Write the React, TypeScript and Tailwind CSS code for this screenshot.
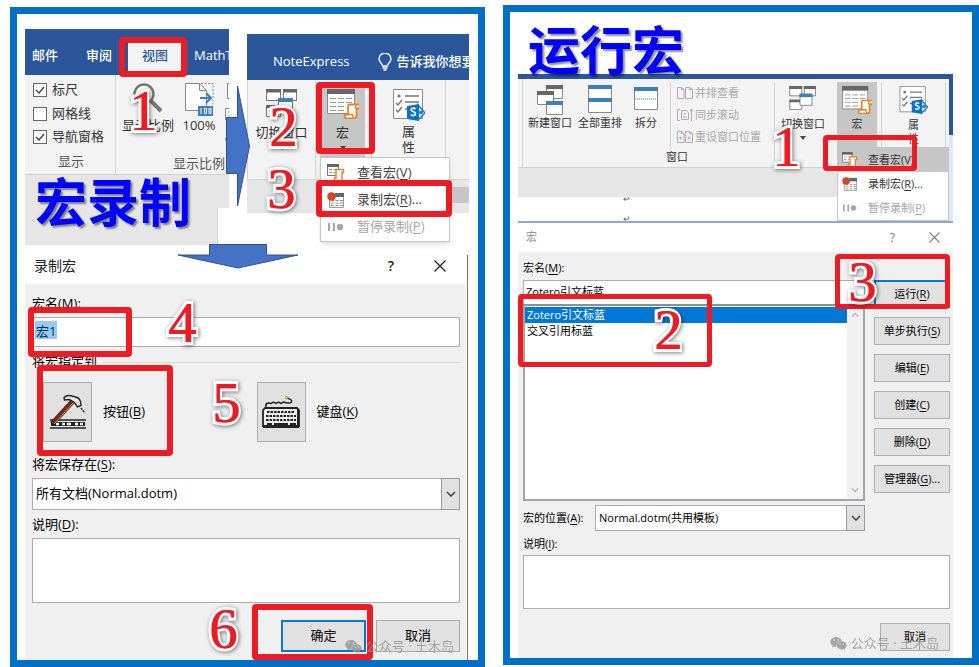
import type { ReactNode } from "react";
import { FaWeixin } from "react-icons/fa";

function RedBox({ className }: { className: string }) {
  return <div className={`pointer-events-none absolute z-20 rounded-sm border-[#ed1c24] ${className}`} />;
}

function Step({ n, className }: { n: number; className: string }) {
  return (
    <span
      className={`pointer-events-none absolute z-30 font-['Liberation_Serif',serif] text-[56px] leading-[54px] text-[#ed1c24] [text-shadow:1px_0_0_#ed1c24] drop-shadow-[1px_1px_2px_rgba(0,0,0,0.5)] [-webkit-text-stroke:6px_white] [paint-order:stroke_fill] ${className}`}
    >
      {n}
    </span>
  );
}

function Key({ text, k, tail = "" }: { text: string; k: string; tail?: string }) {
  return (
    <>
      {text}(<span className="underline underline-offset-2">{k}</span>){tail}
    </>
  );
}

function MacroIcon({ className }: { className: string }) {
  return (
    <svg viewBox="0 0 32 30" className={className} fill="none">
      <path d="M.5.5h27v24H.5z" fill="#fff" stroke="#8a8a8a" />
      <path d="M0 0h28v5H0z" fill="#666" />
      <path d="M3 9.500h6M11 9.500h6M19 9.500h6M3 13.500h6M11 13.500h6M19 13.500h6M3 17.500h6M11 17.500h6M3 21.500h6M11 21.500h6" stroke="#999" />
      <path d="M22 15.500h9c2.500 0 2.500 4 0 4h-1.500V26c0 2-1 3.500-2.500 3.500h-7.500c-2.500 0-2.500-4 0-4H21V18c0-1.500.5-2.500 1.500-2.500z" fill="#fff" stroke="#e8822a" strokeWidth="1.800" />
      <path d="M20 25.500h5.500c0 2 .5 3.500 1.500 4M29.500 19.500c-1.500 0-1.500-2.500 0-3.500" stroke="#e8822a" strokeWidth="1.500" />
    </svg>
  );
}

function ViewMacroIcon({ className }: { className: string }) {
  return (
    <svg viewBox="0 0 18 18" className={className} fill="none">
      <path d="M.5.5h11v11H.5z" fill="#fff" stroke="#777" />
      <path d="M0 0h12v3H0z" fill="#666" />
      <path d="M2 5.500h3M6.500 5.500h3M2 8.500h3M6.500 8.500h2" stroke="#999" />
      <path d="M9 5.500h7.500v3H15V17H7.500v-3H9z" fill="#fff" stroke="#e8822a" strokeWidth="1.500" />
    </svg>
  );
}

function SwitchIcon({ className }: { className: string }) {
  return (
    <svg viewBox="0 0 32 28" className={className} fill="#fff">
      <path d="M0.5 0.5h14v11h-14zM17.5 0.5h13v11h-13zM0.5 16.5h14v11h-14z" stroke="#777" />
      <path d="M0 0h15v3.500H0zM17 0h14v3.500H17zM0 16h15v3H0z" fill="#666" />
      <path d="M12.500 9.500h14v13h-14z" stroke="#777" />
      <path d="M12 9h15v4H12z" fill="#3b7fc0" />
    </svg>
  );
}

function PropertiesIcon({ className }: { className: string }) {
  return (
    <svg viewBox="0 0 32 32" className={className} fill="none">
      <path d="M0.500 0.500h29v29h-29z" fill="#fff" stroke="#8a8a8a" />
      <circle cx="6" cy="7" r="1.600" fill="#777" />
      <path d="M12 7h14M12 13h14M12 20h4M3 14l2 2 4-5M3 21l2 2 4-5" stroke="#777" strokeWidth="1.500" />
      <path d="M25 16l7 8-7 7z" fill="#fff" stroke="#1a7cc7" strokeWidth="1.500" />
      <circle cx="28" cy="23.500" r="2" fill="#1a7cc7" />
      <path d="M14 17l12-2v17l-12-2z" fill="#0c72c2" />
      <path d="M22.500 20c-2-1.500-4.500-.8-4.300 1 .2 1.700 4.200 1.500 4.200 3.700 0 2.100-3 2.300-4.600 1" stroke="#fff" strokeWidth="1.700" />
    </svg>
  );
}

function RecordIcon({ className }: { className: string }) {
  return (
    <svg viewBox="0 0 18 16" className={className} fill="none">
      <path d="M2.500 2.500h14v13h-14z" fill="#fff" stroke="#9a9a9a" />
      <path d="M8 1h9v4H8z" fill="#666" />
      <path d="M4 8.500h3M8.500 8.500h3M13 8.500h3M4 11h3M8.500 11h3M13 11h3M4 13.500h3M8.500 13.500h3M13 13.500h3" stroke="#8a8a8a" />
      <circle cx="4.500" cy="4.500" r="4.300" fill="#d24726" />
    </svg>
  );
}

function PauseIcon({ className }: { className: string }) {
  return (
    <svg viewBox="0 0 18 16" className={className} fill="#a6a6a6">
      <path d="M1 4h2v8H1zM6 4h2v8H6z" />
      <circle cx="13" cy="8" r="3.200" />
    </svg>
  );
}

function Caret({ className = "" }: { className?: string }) {
  return (
    <svg viewBox="0 0 6 4" className={`h-1 w-1.5 fill-[#444] ${className}`}>
      <path d="M0 0h6L3 4z" />
    </svg>
  );
}

function Cross({ className }: { className: string }) {
  return (
    <svg viewBox="0 0 12 12" className={className} fill="none" stroke="currentColor" strokeWidth="1.300">
      <path d="M.5.5l11 11M11.500.5l-11 11" />
    </svg>
  );
}

function Chevron({ className, up = false }: { className: string; up?: boolean }) {
  return (
    <svg viewBox="0 0 10 6" className={className} fill="none" stroke="currentColor" strokeWidth="1.600">
      <path d={up ? "M1 5l4-4 4 4" : "M1 1l4 4 4-4"} />
    </svg>
  );
}

function Check({ label, checked = false }: { label: string; checked?: boolean }) {
  return (
    <label className="flex h-6 items-center gap-[5px]">
      <span className="grid size-3.5 place-items-center">
        <input
          type="checkbox"
          defaultChecked={checked}
          className="peer col-start-1 row-start-1 size-3.5 appearance-none border border-[#666] bg-white"
        />
        <svg viewBox="0 0 10 8" className="invisible col-start-1 row-start-1 h-2 w-2.5 peer-checked:visible" fill="none" stroke="#444" strokeWidth="1.400">
          <path d="M1 4l3 3 5-6" />
        </svg>
      </span>
      {label}
    </label>
  );
}

function DropDown({ id, value, className }: { id: string; value: string; className: string }) {
  return (
    <div className={`relative flex ${className}`}>
      <select id={id} className="w-full appearance-none border border-[#abadb3] bg-white px-[3px] outline-none">
        <option>{value}</option>
      </select>
      <span className="pointer-events-none absolute inset-y-0 right-0 flex w-[19px] items-center justify-center border border-[#9a9a9a] bg-[#e1e1e1] text-[#444]">
        <Chevron className="h-1.5 w-2.5" />
      </span>
    </div>
  );
}

function PushButton({ children, className = "", label }: { children: ReactNode; className?: string; label?: string }) {
  return (
    <button type="button" aria-label={label} className={`border border-[#adadad] bg-[#e1e1e1] whitespace-nowrap ${className}`}>
      {children}
    </button>
  );
}

function Watermark({ className }: { className: string }) {
  return (
    <div className={`pointer-events-none absolute z-30 flex items-center gap-1 text-[13px] leading-5 whitespace-nowrap text-[#929292] opacity-80 ${className}`}>
      <FaWeixin className="size-[17px]" />
      <span>公众号 · 土木岛</span>
    </div>
  );
}

function ViewRibbon() {
  return (
    <section className="relative h-[216px] min-w-0">
      <div className="h-full overflow-hidden">
        <nav className="flex h-[46px] items-center bg-[#2b579a] pt-2 pl-[7px] text-[13px] font-medium whitespace-nowrap text-white">
          <button type="button">邮件</button>
          <button type="button" className="ml-7">审阅</button>
          <button type="button" className="ml-4 h-[30px] w-[54px] shrink-0 bg-[#f3f3f3] text-[#2b579a]">视图</button>
          <button type="button" className="ml-3">MathType</button>
        </nav>
        <div className="flex h-[100px] border-b border-[#d2d2d2] bg-[#f3f3f3] text-[13px] text-[#333]">
          <div className="flex w-[91px] shrink-0 flex-col border-r border-[#d4d4d4] pt-[3px] pl-2 whitespace-nowrap">
            <Check label="标尺" checked />
            <Check label="网格线" />
            <Check label="导航窗格" checked />
            <span className="pl-[25px] leading-[25px] text-[#555]">显示</span>
          </div>
          <div className="flex min-w-0 flex-1 flex-col justify-between pt-2">
            <div className="flex pl-[5px] whitespace-nowrap">
              <button type="button" className="flex w-[54px] shrink-0 flex-col items-center">
                <svg viewBox="0 0 30 32" className="h-8 w-[30px]" fill="none" stroke="#777">
                  <circle cx="11" cy="11" r="9.500" fill="#fff" strokeWidth="2.500" />
                  <path d="M18 18l10 10" strokeWidth="4" />
                </svg>
                <span className="leading-5">显示比例</span>
              </button>
              <button type="button" className="ml-1.5 flex w-9 shrink-0 flex-col items-center">
                <svg viewBox="0 0 29 34" className="h-[34px] w-[29px]" fill="none">
                  <path d="M.5.5h14l7 7v20H.5z" fill="#fff" stroke="#888" />
                  <path d="M14.500.5v7h7" stroke="#888" />
                  <path d="M16 .5h12v21" stroke="#888" strokeDasharray="2 1.500" />
                  <path d="M15 15h10M21 10l5 5-5 5" stroke="#3b7fc0" strokeWidth="2" />
                  <path d="M13 23h15v10H13z" fill="#3b7fc0" />
                  <path d="M16 25v6M19.500 25.500h2v5h-2zM24 25.500h2v5h-2z" stroke="#fff" />
                </svg>
                <span className="leading-4">100%</span>
              </button>
              <svg viewBox="0 0 8 66" className="ml-2 h-[66px] w-2 shrink-0" fill="none" stroke="#888">
                <path d="M8 .5H2.500v15H8M8 25.500H.5v11h8M3 29h5M3 33h5" />
                <path d="M5 52l-4 4 4 4" stroke="#3b7fc0" strokeWidth="2" />
              </svg>
            </div>
            <span className="pr-1 text-right leading-[22px] text-[#555]">显示比例</span>
          </div>
        </div>
        <div className="h-[33px] bg-[#e6e6e6]" />
        <div className="mr-[11px] h-[37px] border-r border-[#d2d2d2] bg-[#e6e6e6]" />
      </div>
      <h1 className="absolute top-[147px] left-[10px] text-[52px] leading-[52px] font-bold whitespace-nowrap text-[#0000ff] [text-shadow:2px_2px_2px_rgba(0,0,0,0.45)]">宏录制</h1>
      <RedBox className="top-2 left-[94px] h-10 w-[68px] border-6" />
      <Step n={1} className="top-[55px] left-[104px]" />
      <svg viewBox="0 0 24 122" className="absolute top-[56px] left-[201px] z-10 h-[122px] w-6">
        <path d="M.5 32.500h11V1L23.500 61l-12 60V88.500H.5z" fill="#4472c4" stroke="#2f528f" />
      </svg>
      <svg viewBox="0 0 122 25" className="absolute top-[215px] left-[152px] z-10 h-[25px] w-[122px]">
        <path d="M32.500.5h57v10.500H121L61 24 1 11h31.500z" fill="#4472c4" stroke="#2f528f" />
      </svg>
    </section>
  );
}

function MacroRibbon() {
  return (
    <section className="relative mt-[5px] min-w-0 text-[13px] whitespace-nowrap text-[#333]">
      <nav className="flex h-[46px] items-center overflow-hidden bg-[#2b579a] pt-2.5 pl-[26px] font-medium text-white">
        <button type="button">NoteExpress</button>
        <svg viewBox="0 0 14 18" className="ml-7 h-[18px] w-3.5 shrink-0" fill="none" stroke="#fff" strokeWidth="1.300">
          <path d="M4.500 13c0-3-3.500-3.500-3.500-7a6 6 0 0 1 12 0c0 3.500-3.500 4-3.500 7zM4.500 15h5M5.500 17h3" />
        </svg>
        <button type="button" className="ml-[5px]">告诉我你想要</button>
      </nav>
      <div className="flex h-[100px] border-b border-[#d2d2d2] bg-[#f3f3f3]">
        <div className="w-px shrink-0 bg-[#d4d4d4]" />
        <button type="button" className="flex w-[68px] flex-col items-center border-r border-[#d4d4d4] pt-[9px]">
          <SwitchIcon className="h-7 w-8" />
          <span className="mt-[5px] leading-5">切换窗口</span>
          <Caret className="mt-1" />
        </button>
        <div className="flex w-[56px] border-r border-[#d4d4d4] pt-2 pl-1">
          <button type="button" className="flex h-[72px] w-[45px] flex-col items-center bg-[#c6c6c6] pt-px">
            <MacroIcon className="h-[30px] w-8" />
            <span className="mt-[3px] leading-5">宏</span>
            <Caret className="mt-1" />
          </button>
        </div>
        <button type="button" className="flex w-[74px] flex-col items-center border-r border-[#d4d4d4] pt-[9px]">
          <PropertiesIcon className="size-8" />
          <span className="mt-0.5 leading-4">属<br />性</span>
        </button>
      </div>
      <div className="flex h-[33px] items-start justify-end bg-[#e6e6e6] pt-[7px]">
        <div className="h-4 w-[18px] bg-[#c6c6c6]" />
      </div>
      <ul className="absolute top-[123px] left-[73px] z-10 w-[130px] border border-[#c6c6c6] bg-white py-px shadow-md">
        <li><button type="button" className="flex h-[27px] items-center gap-3 pl-1.5 text-[#444]"><ViewMacroIcon className="size-[18px]" /><span><Key text="查看宏" k="V" /></span></button></li>
        <li><button type="button" className="flex h-[27px] items-center gap-3 pl-1.5 text-[#444]"><RecordIcon className="h-4 w-[18px]" /><span><Key text="录制宏" k="R" tail="..." /></span></button></li>
        <li><button type="button" className="flex h-[27px] items-center gap-3 pl-1.5 text-[#a6a6a6]"><PauseIcon className="h-4 w-[18px]" /><span><Key text="暂停录制" k="P" /></span></button></li>
      </ul>
      <RedBox className="top-12 left-[69px] h-[72px] w-[59px] border-6" />
      <RedBox className="top-[146px] left-[69px] h-[37px] w-[136px] border-6" />
      <Step n={2} className="top-[66px] left-[22px]" />
      <Step n={3} className="top-[128px] left-[20px]" />
    </section>
  );
}

function RecordDialog() {
  return (
    <section className="relative mt-2.5 mr-px border-r border-[#777] text-[13px] text-black">
      <header className="flex h-[29px] items-center bg-white pr-[21px] pb-2 pl-[9px] text-[14px] text-[#222]">
        <h2 className="flex-1">录制宏</h2>
        <button type="button" className="mr-10 font-semibold">?</button>
        <button type="button" aria-label="关闭"><Cross className="size-3" /></button>
      </header>
      <form className="mr-px flex flex-col bg-[#f0f0f0] pt-[9px] pr-1.5 pb-2 pl-[7px]">
        <label htmlFor="rec-name" className="h-5 leading-5"><Key text="宏名" k="M" tail=":" /></label>
        <div className="mt-1 grid h-[30px] items-center">
          <input id="rec-name" defaultValue="宏1" className="col-start-1 row-start-1 h-full border border-[#abadb3] bg-white px-[3px] pb-1 outline-none" />
          <span className="pointer-events-none col-start-1 row-start-1 mb-1 ml-[3px] h-[18px] w-[22px] bg-[#0078d7]/40" />
        </div>
        <div className="mt-[5px] flex h-5 items-center gap-1.5">
          <span>将宏指定到</span>
          <div className="h-px flex-1 bg-[#d9d9d9]" />
        </div>
        <div className="mt-2.5 grid grid-cols-2 pl-[11px]">
          <div className="flex items-center gap-[11px]">
            <PushButton label="按钮" className="grid h-[60px] w-[49px] place-items-center">
              <svg viewBox="0 0 38 36" className="h-9 w-[38px]" fill="none">
                <path d="M1 26h36M1 34h36" stroke="#222" strokeWidth="1.500" />
                <path d="M2 28h34v4H2z" fill="#222" />
                <path d="M7 30h3M13 30h3M18 30h4M26 30h3M31 30h3" stroke="#fff" strokeWidth="2.500" />
                <path d="M3 30L24 7" stroke="#222" strokeWidth="5" />
                <path d="M3 29L24 6" stroke="#a51c1c" strokeWidth="2" />
                <path d="M5 30L25 8" stroke="#d8c83c" strokeWidth="1" />
                <path d="M15 3.500c2-2 5-2.500 8-1.500l5 1.500c3 1 4 4 4 8l-3.500 1.500-3-4.500-5-3-5 .5z" fill="#e8e8e8" stroke="#222" strokeWidth="1.400" />
                <path d="M32 14l4 5" stroke="#222" strokeWidth="1.500" strokeDasharray="2 1" />
              </svg>
            </PushButton>
            <span><Key text="按钮" k="B" /></span>
          </div>
          <div className="flex items-center gap-[11px] pl-[5px]">
            <PushButton label="键盘" className="grid h-[60px] w-[49px] place-items-center">
              <svg viewBox="0 0 38 32" className="h-8 w-[38px]" fill="none" stroke="#222">
                <path d="M4 11c-1-5 3-4 5-3.500l2.500-1.500 2.500 1.500 2.500-1.500 2.500 1.500 2.500-1.500c4 1.500 9 1.500 8-1.500-.5-1.500-3-1.500-4-2.500" strokeWidth="1.500" />
                <circle cx="24.500" cy="1.800" r="1.200" stroke="#a59b1c" />
                <path d="M3 12h32l2 2v16H1V14z" fill="#eee" strokeWidth="1.800" />
                <path d="M5 16h28M4 20h30M4 24h30" strokeWidth="2.200" strokeDasharray="2.500 1" />
                <path d="M5 28h5M12 28h14M28 28h6M36 13v17M1 31h36" strokeWidth="2" />
              </svg>
            </PushButton>
            <span><Key text="键盘" k="K" /></span>
          </div>
        </div>
        <label htmlFor="rec-store" className="mt-3 h-5 leading-5"><Key text="将宏保存在" k="S" tail=":" /></label>
        <DropDown id="rec-store" value="所有文档(Normal.dotm)" className="mt-1 h-8" />
        <label htmlFor="rec-desc" className="mt-1 h-5 leading-5"><Key text="说明" k="D" tail=":" /></label>
        <textarea id="rec-desc" className="mt-1 block h-[65px] resize-none border border-[#abadb3] bg-white outline-none" />
        <div className="mt-[17px] flex justify-end gap-2.5">
          <PushButton className="h-8 w-[85px] outline-2 -outline-offset-2 outline-[#0078d7]">确定</PushButton>
          <PushButton className="h-8 w-[84px]">取消</PushButton>
        </div>
      </form>
      <RedBox className="top-[52px] left-[3px] h-[50px] w-[104px] border-6" />
      <RedBox className="top-[110px] left-3 h-[91px] w-[136px] border-6" />
      <RedBox className="right-[94px] bottom-0 h-14 w-[121px] border-6" />
      <Step n={4} className="top-[41px] left-[143px]" />
      <Step n={5} className="top-[121px] left-[187px]" />
      <Step n={6} className="top-[347px] left-[184px]" />
      <Watermark className="right-[13px] bottom-1" />
    </section>
  );
}

function WindowRibbon() {
  return (
    <section className="relative text-[11px] whitespace-nowrap text-[#333]">
      <div className="flex border-t-5 border-b-2 border-t-[#2b579a] border-b-[#8ea9cf]">
        <div className="min-w-0 flex-1">
          <div className="flex h-[88px] bg-[#f3f3f3] pl-1">
            <div className="flex flex-col border-l border-[#d4d4d4] pt-[3px]">
              <div className="flex h-[66px]">
                <div className="flex w-[148px] items-start gap-1 border-r border-[#d4d4d4] pt-[3px] pl-1">
                  <button type="button" className="flex w-[46px] flex-col items-center">
                    <svg viewBox="0 0 26 30" className="h-[30px] w-[26px]" fill="#fff" stroke="#888">
                      <path d="M9.500.5h16v13h-16z" /><path d="M9 0h17v4H9z" fill="#666" stroke="none" />
                      <path d="M.5 6.500h16v13H.5z" /><path d="M0 6h17v4H0z" fill="#666" stroke="none" />
                      <path d="M9.500 16.500h16v13h-16z" /><path d="M9 16h17v4H9z" fill="#3b7fc0" stroke="none" />
                    </svg>
                    <span className="leading-4">新建窗口</span>
                  </button>
                  <button type="button" className="flex w-[46px] flex-col items-center">
                    <svg viewBox="0 0 24 30" className="h-[30px] w-6" fill="#fff" stroke="#888">
                      <path d="M.5.5h23v27H.5z" /><path d="M0 0h24v4H0zM0 13h24v4H0z" fill="#3b7fc0" stroke="none" />
                    </svg>
                    <span className="leading-4">全部重排</span>
                  </button>
                  <button type="button" className="ml-px flex w-9 flex-col items-center">
                    <svg viewBox="0 0 24 30" className="h-[30px] w-6" fill="#fff" stroke="#888">
                      <path d="M.5 2.500h23v22H.5z" /><path d="M0 2h24v4H0z" fill="#3b7fc0" stroke="none" />
                      <path d="M1 14h22" stroke="#3b7fc0" strokeDasharray="1 1" />
                    </svg>
                    <span className="leading-4">拆分</span>
                  </button>
                </div>
                <div className="flex w-[103px] flex-col pl-1.5 text-[#a8a8a8]">
                  {["并排查看", "同步滚动", "重设窗口位置"].map((name, i) => (
                    <button type="button" key={name} className="flex h-[22px] items-center gap-0.5">
                      <svg viewBox="0 0 16 12" className="h-3 w-4 shrink-0" fill="none" stroke="#b5a9b5">
                        {i === 1 ? (
                          <path d="M3 .5H.5v11H3M4.500 1.500h5l2 2v7h-7zM6 5h3M6 8h4M14.500 0v12M13 2l1.500-2L16 2" />
                        ) : (
                          <path d="M.5.5h4l2.500 2v9H.5zM8.500.5h4l3 2v9h-7zM4.500.5v2H7M12.500.5v2h3" />
                        )}
                        {i === 2 && <path d="M2 7h3M3.500 5.500v3M10.500 7h3M12 5.500v3" />}
                      </svg>
                      <span>{name}</span>
                    </button>
                  ))}
                </div>
              </div>
              <span className="pl-[143px] leading-[18px]">窗口</span>
            </div>
            <button type="button" className="my-1 flex w-[57px] flex-col items-center border-l border-[#d4d4d4] pt-[3px]">
              <SwitchIcon className="h-6 w-7" />
              <span className="mt-1.5 leading-4">切换窗口</span>
              <Caret className="mt-1" />
            </button>
            <button type="button" className="mt-[3px] ml-1.5 flex w-10 flex-col items-center bg-[#c6c6c6] pt-1">
              <MacroIcon className="h-7 w-[30px]" />
              <span className="mt-0.5 leading-4">宏</span>
            </button>
            <button type="button" className="my-1 ml-1 flex w-[65px] flex-col items-center border-x border-[#d4d4d4] pt-[3px]">
              <PropertiesIcon className="h-7 w-[29px]" />
              <span className="mt-1 leading-3.5">属<br />性</span>
            </button>
          </div>
          <div className="h-[30px] border-t border-[#d2d2d2] bg-[#e6e6e6]" />
          <div className="flex h-6 flex-col overflow-hidden bg-white pl-[105px] text-[9px] leading-[20px] text-[#666]">
            <span className="-mt-2">↵</span>
            <span>↵</span>
          </div>
        </div>
        <div className="w-1 bg-[#dce9f8]">
          <div className="h-14 bg-[#2b579a]" />
        </div>
      </div>
      <ul className="absolute top-[73px] right-1 z-10 w-[112px] border border-[#c6c6c6] bg-white">
        <li><button type="button" className="flex h-6 w-full items-center gap-2.5 bg-[#c6c6c6] pl-1"><ViewMacroIcon className="size-4" /><span><Key text="查看宏" k="V" /></span></button></li>
        <li><button type="button" className="flex h-6 w-full items-center gap-2.5 pl-1"><RecordIcon className="h-3.5 w-4" /><span><Key text="录制宏" k="R" tail="..." /></span></button></li>
        <li><button type="button" className="flex h-6 w-full items-center gap-2.5 pl-1 text-[#a6a6a6]"><PauseIcon className="h-3.5 w-4" /><span><Key text="暂停录制" k="P" /></span></button></li>
      </ul>
      <RedBox className="top-[61px] right-[36px] h-9 w-[94px] border-5" />
      <Step n={1} className="top-[46px] right-[153px]" />
    </section>
  );
}

function MacrosDialog() {
  return (
    <section className="relative text-[11px] text-black">
      <header className="flex h-[29px] items-center bg-white pr-[13px] pl-2 text-[#888]">
        <h2 className="flex-1">宏</h2>
        <button type="button" className="mr-[34px] text-[13px]">?</button>
        <button type="button" aria-label="关闭"><Cross className="size-[11px]" /></button>
      </header>
      <form className="flex flex-col bg-[#f0f0f0] pt-1.5 pr-[3px] pb-[7px] pl-[5px]">
        <label htmlFor="macro-name" className="h-5 leading-5"><Key text="宏名" k="M" tail=":" /></label>
        <div className="mt-0.5 flex gap-[9px]">
          <div className="flex min-w-0 flex-1 flex-col">
            <input id="macro-name" defaultValue="Zotero引文标蓝" className="h-6 border border-b-0 border-[#abadb3] bg-white px-0.5 pb-1 outline-none" />
            <div className="flex h-[197px] border-2 border-[#a0a4ab] border-t-[#8a8f98] bg-white">
              <ul role="listbox" aria-label="宏" className="flex-1 pt-px leading-4">
                <li role="option" aria-selected="true" className="bg-[#0078d7] pl-0.5 text-white">Zotero引文标蓝</li>
                <li role="option" aria-selected="false" className="pl-0.5">交叉引用标蓝</li>
              </ul>
              <div className="flex w-4 flex-col items-center justify-between bg-[#f0f0f0] py-1.5 text-[#b0b0b0]">
                <Chevron up className="h-1.5 w-2" />
                <Chevron className="h-1.5 w-2" />
              </div>
            </div>
            <div className="mt-1 flex items-center">
              <label htmlFor="macro-place" className="w-[72px] whitespace-nowrap"><Key text="宏的位置" k="A" tail=":" /></label>
              <DropDown id="macro-place" value="Normal.dotm(共用模板)" className="h-[26px] flex-1" />
            </div>
          </div>
          <div className="flex w-[76px] flex-col gap-[9px]">
            <PushButton className="h-7 outline-2 -outline-offset-2 outline-[#0078d7]"><Key text="运行" k="R" /></PushButton>
            <PushButton className="h-7"><Key text="单步执行" k="S" /></PushButton>
            <PushButton className="h-7"><Key text="编辑" k="E" /></PushButton>
            <PushButton className="h-7"><Key text="创建" k="C" /></PushButton>
            <PushButton className="h-7"><Key text="删除" k="D" /></PushButton>
            <PushButton className="h-7"><Key text="管理器" k="G" tail="..." /></PushButton>
          </div>
        </div>
        <label htmlFor="macro-desc" className="mt-[3px] h-5 leading-5"><Key text="说明" k="I" tail=":" /></label>
        <textarea id="macro-desc" className="mt-px block h-[54px] resize-none border border-[#abadb3] bg-white outline-none" />
        <div className="mt-3.5 flex justify-end">
          <PushButton className="h-7 w-[70px]">取消</PushButton>
        </div>
      </form>
      <RedBox className="top-[71px] left-0 h-[73px] w-[194px] border-5" />
      <RedBox className="top-[31px] right-[3px] h-[55px] w-[115px] border-5" />
      <Step n={2} className="top-[80px] left-[136px]" />
      <Step n={3} className="top-[32px] right-[77px]" />
      <Watermark className="right-[14px] bottom-[5px]" />
    </section>
  );
}

export default function App() {
  return (
    <main className="grid grid-cols-[475fr_476fr] items-start gap-x-[18px] bg-white pl-2.5 font-['Open_Sans','Noto_Sans_CJK_SC',sans-serif]">
      <article className="mt-[7px] min-w-0 border-7 border-[#0070c4] pt-[15px] pr-[9px] pl-2">
        <div className="grid grid-cols-[minmax(0,204fr)_minmax(0,222fr)] items-start gap-x-[18px]">
          <ViewRibbon />
          <MacroRibbon />
        </div>
        <RecordDialog />
      </article>
      <article className="mt-[5px] min-w-0 border-7 border-[#0070c4] pr-[19px] pl-2">
        <h1 className="relative z-10 h-[62px] pt-3 pl-2.5 text-[52px] leading-[52px] font-bold text-[#0000ff] [text-shadow:2px_2px_2px_rgba(0,0,0,0.45)]">运行宏</h1>
        <WindowRibbon />
        <MacrosDialog />
      </article>
    </main>
  );
}
